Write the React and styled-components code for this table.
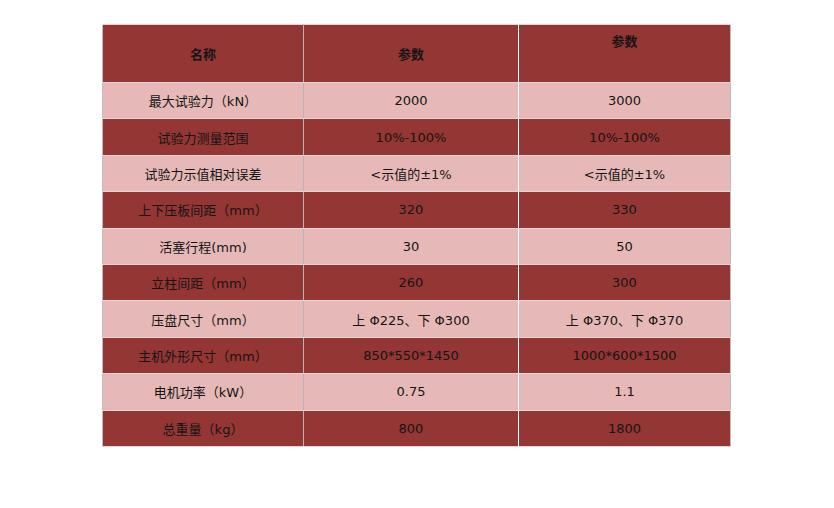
import React from 'react';
import styled, { createGlobalStyle } from 'styled-components';

const GlobalStyle = createGlobalStyle`
  html, body {
    margin: 0;
    padding: 0;
    background: #ffffff;
  }
  body {
    font-family: "DejaVu Sans", "Noto Sans CJK SC", sans-serif;
  }
`;

const Page = styled.div`
  padding: 24px 0 0 102px;
`;

const Table = styled.table`
  border-collapse: collapse;
  width: 628px;
  table-layout: fixed;
  border: 1px solid #bdbdbd;
  font-size: 13px;
  color: #151515;
`;

const Row = styled.tr`
  background: ${(p) => (p.$light ? '#e6b9b8' : '#943634')};
`;

const Cell = styled.td`
  height: ${(p) => (p.$head ? '51px' : '35.4px')};
  padding: ${(p) => (p.$top ? '6px 0 0' : '0')};
  vertical-align: ${(p) => (p.$top ? 'top' : 'middle')};
  text-align: center;
  font-weight: ${(p) => (p.$head ? 'bold' : 'normal')};
  font-size: 13px;
  border-top: 1px solid #e2d6d6;
  border-bottom: 1px solid #e2d6d6;
  border-right: 1px solid ${(p) => (p.$white ? '#ffffff' : '#b9b3b3')};
  &:last-child {
    border-right: none;
  }
`;

const rows = [
  ['最大试验力（kN）', '2000', '3000'],
  ['试验力测量范围', '10%-100%', '10%-100%'],
  ['试验力示值相对误差', '<示值的±1%', '<示值的±1%'],
  ['上下压板间距（mm）', '320', '330'],
  ['活塞行程(mm)', '30', '50'],
  ['立柱间距（mm）', '260', '300'],
  ['压盘尺寸（mm）', '上 Φ225、下 Φ300', '上 Φ370、下 Φ370'],
  ['主机外形尺寸（mm）', '850*550*1450', '1000*600*1500'],
  ['电机功率（kW）', '0.75', '1.1'],
  ['总重量（kg）', '800', '1800'],
];

export default function App() {
  return (
    <>
      <GlobalStyle />
      <Page>
        <Table>
          <colgroup>
            <col style={{ width: '201px' }} />
            <col style={{ width: '215px' }} />
            <col style={{ width: '212px' }} />
          </colgroup>
          <tbody>
            <Row>
              <Cell $head>名称</Cell>
              <Cell $head $white>参数</Cell>
              <Cell $head $top>参数</Cell>
            </Row>
            {rows.map((r, i) => (
              <Row key={i} $light={i % 2 === 0}>
                <Cell>{r[0]}</Cell>
                <Cell $white>{r[1]}</Cell>
                <Cell>{r[2]}</Cell>
              </Row>
            ))}
          </tbody>
        </Table>
      </Page>
    </>
  );
}
